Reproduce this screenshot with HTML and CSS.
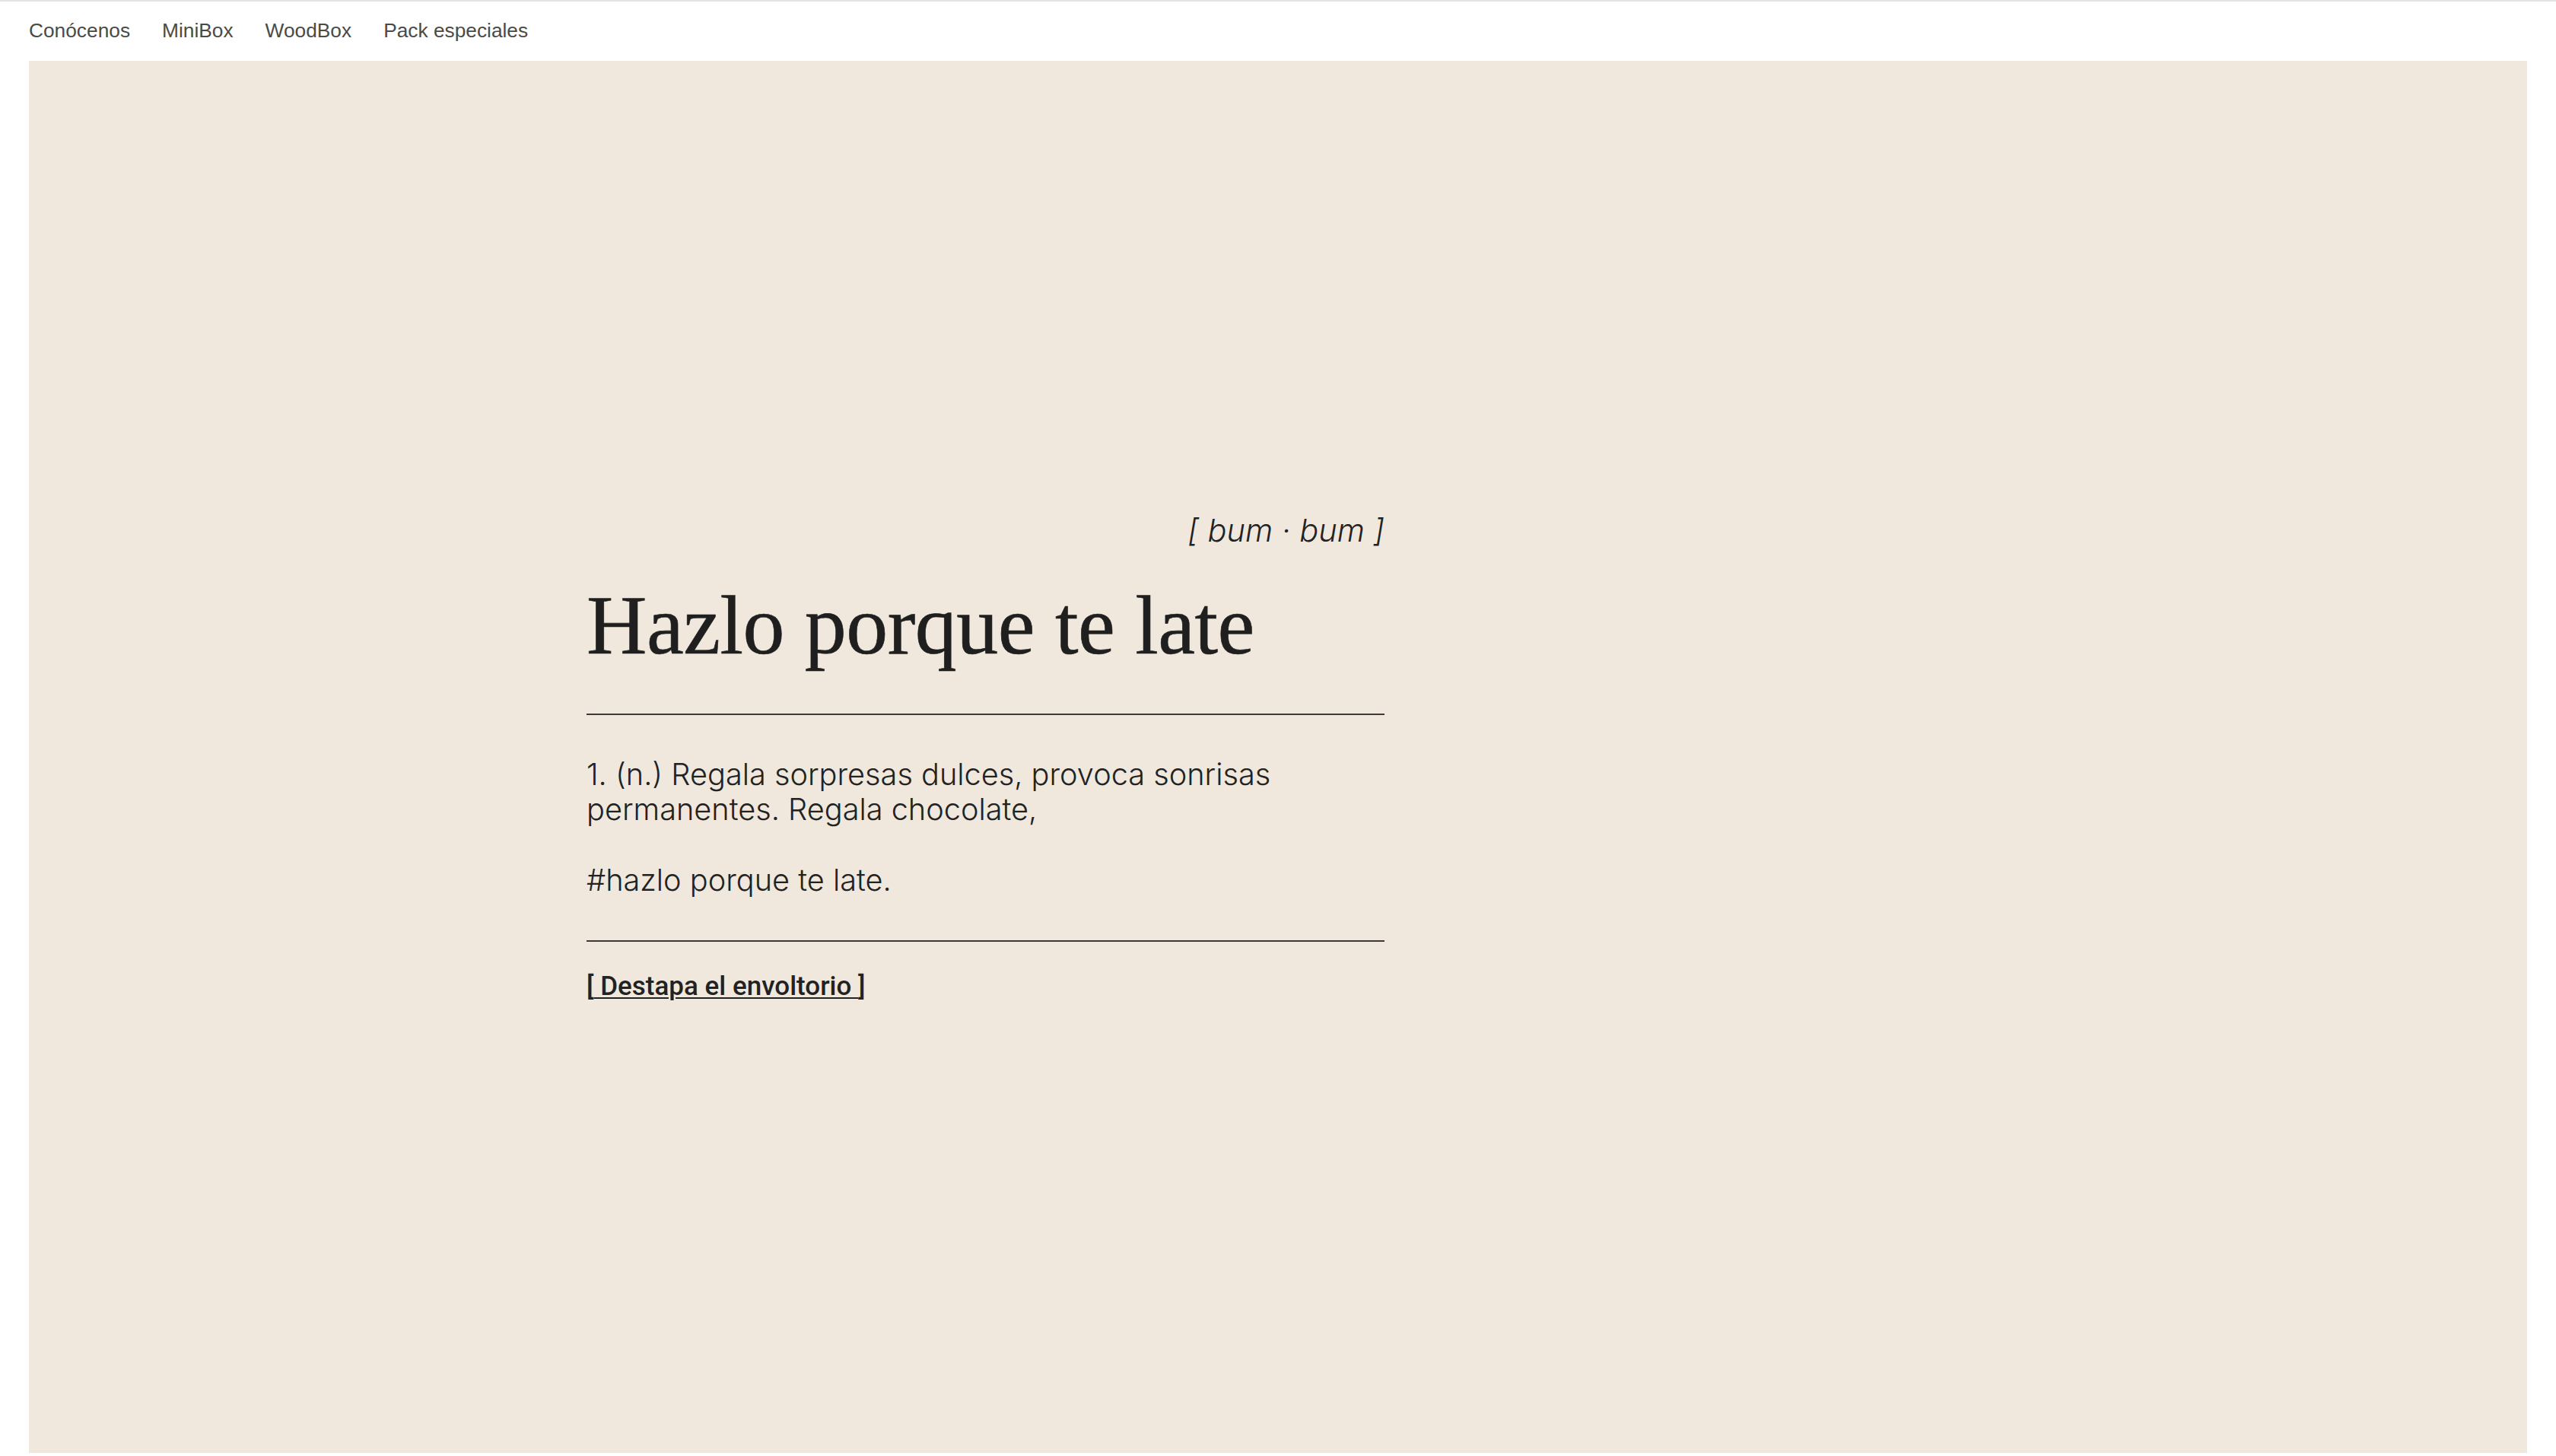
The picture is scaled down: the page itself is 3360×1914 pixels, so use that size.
FILE: index.html
```html
<!DOCTYPE html>
<html lang="es">
<head>
<meta charset="utf-8">
<title>Hazlo porque te late</title>
<link rel="stylesheet" href="styles.css">
</head>
<body>
<header class="topbar">
  <nav class="menu">
    <a class="menu-link" href="#">Conócenos</a>
    <a class="menu-link" href="#">MiniBox</a>
    <a class="menu-link" href="#">WoodBox</a>
    <a class="menu-link" href="#">Pack especiales</a>
  </nav>
</header>
<main class="hero">
  <div class="definition">
    <p class="phonetic">[ bum · bum ]</p>
    <h1 class="title">Hazlo porque te late</h1>
    <hr class="rule rule-top">
    <div class="meaning">
      <p>1. (n.) Regala sorpresas dulces, provoca sonrisas permanentes. Regala chocolate,</p>
      <p>#hazlo porque te late.</p>
    </div>
    <hr class="rule rule-bottom">
    <a class="cta" href="#">[<span class="cta-text"> Destapa el envoltorio </span>]</a>
  </div>
</main>
</body>
</html>
```
FILE: styles.css
```css
html, body {
  margin: 0;
  padding: 0;
  background: #ffffff;
}

.topbar {
  border-top: 2px solid #e2e2e2;
  height: 80px;
  box-sizing: border-box;
  padding: 23px 38px 0;
}

.menu {
  display: flex;
  gap: 42px;
}

.menu-link {
  font-family: "Liberation Sans", Arial, sans-serif;
  font-size: 26.3px;
  color: #4b4b46;
  text-decoration: none;
  line-height: 30px;
}

.hero {
  margin: 0 38px;
  height: 1830px;
  background: #f0e8dc;
  display: flex;
  align-items: center;
  padding-left: 733px;
  box-sizing: border-box;
}

.definition {
  width: 1049px;
  color: #222222;
}

.phonetic {
  margin: 0;
  text-align: right;
  font-family: "Inter", "Noto Sans", sans-serif;
  font-weight: 300;
  font-style: italic;
  font-size: 41.5px;
  line-height: 46px;
}

.title {
  margin: 42px 0 0;
  font-family: "Liberation Serif", "Times New Roman", serif;
  font-weight: 400;
  font-size: 110px;
  line-height: 121px;
  letter-spacing: -0.55px;
  color: #1f1f1f;
  -webkit-text-stroke: 0.6px #1f1f1f;
}

.rule {
  margin: 0;
  border: 0;
  height: 2px;
  background: #3a3a38;
}

.rule-top {
  margin-top: 55px;
}

.meaning {
  margin-top: 55px;
  font-family: "Inter", "Noto Sans", sans-serif;
  font-weight: 300;
  font-size: 39.7px;
  line-height: 46.5px;
}

.meaning p {
  margin: 0 0 46.5px;
}

.meaning p:last-child {
  margin-bottom: 0;
}

.rule-bottom {
  margin-top: 55px;
}

.cta {
  display: inline-block;
  margin-top: 38px;
  font-family: "Roboto", "Liberation Sans", sans-serif;
  font-weight: 500;
  font-size: 35px;
  color: #222222;
  text-decoration: none;
}

.cta-text {
  text-decoration: underline;
  text-decoration-thickness: 2px;
  text-underline-offset: 3px;
}
```
